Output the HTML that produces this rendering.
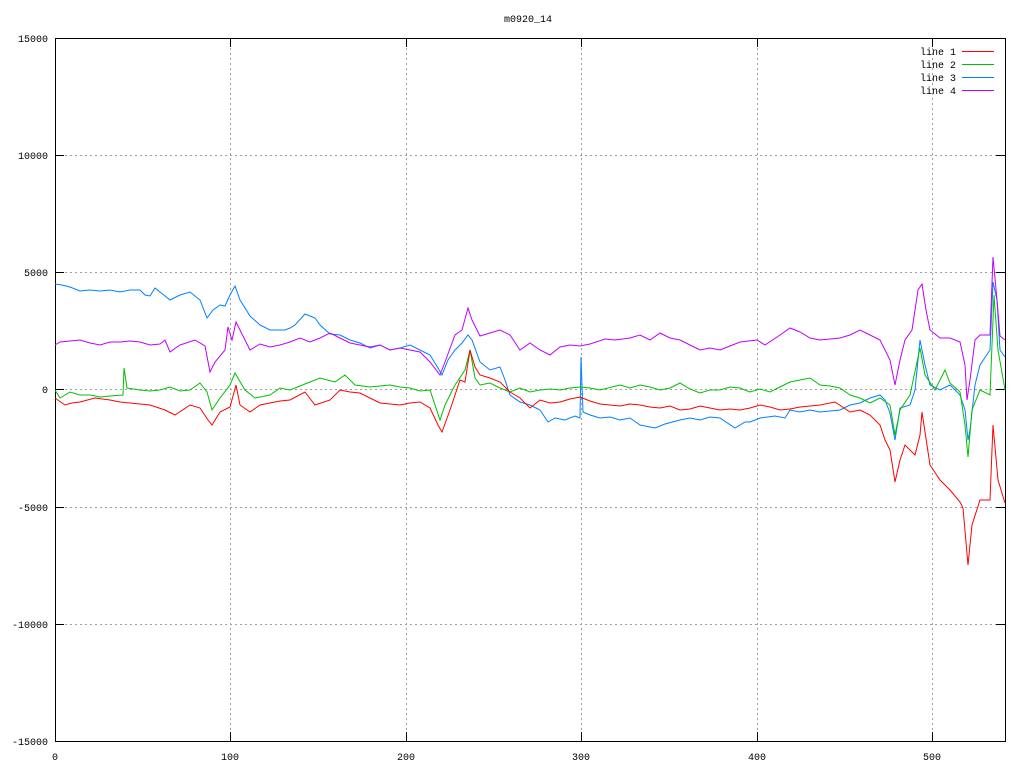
<!DOCTYPE html>
<html><head><style>
html,body{margin:0;padding:0;background:#fff;}
svg{display:block;}
text{font-family:"Liberation Mono",monospace;font-size:10px;fill:#000;}
</style></head><body>
<svg width="1024" height="768" viewBox="0 0 1024 768" xmlns="http://www.w3.org/2000/svg">
<rect width="1024" height="768" fill="#fff"/>
<g stroke="#a0a0a0" stroke-width="1" stroke-dasharray="2,3" fill="none" shape-rendering="crispEdges">
<line x1="55" y1="155.5" x2="1005" y2="155.5"/>
<line x1="55" y1="272.5" x2="1005" y2="272.5"/>
<line x1="55" y1="389.5" x2="1005" y2="389.5"/>
<line x1="55" y1="507.5" x2="1005" y2="507.5"/>
<line x1="55" y1="624.5" x2="1005" y2="624.5"/>
<line x1="230.5" y1="38" x2="230.5" y2="741"/>
<line x1="406.5" y1="38" x2="406.5" y2="741"/>
<line x1="581.5" y1="38" x2="581.5" y2="741"/>
<line x1="757.5" y1="38" x2="757.5" y2="741"/>
<line x1="932.5" y1="38" x2="932.5" y2="741"/>
</g>
<g stroke="#000" stroke-width="1" fill="none" shape-rendering="crispEdges">
<rect x="55.5" y="38.5" width="950" height="703"/>
<path d="M55 155.5h9M55 272.5h9M55 389.5h9M55 507.5h9M55 624.5h9M1005 155.5h-9M1005 272.5h-9M1005 389.5h-9M1005 507.5h-9M1005 624.5h-9M230.5 741v-9M406.5 741v-9M581.5 741v-9M757.5 741v-9M932.5 741v-9M230.5 38v9M406.5 38v9M581.5 38v9M757.5 38v9M932.5 38v9"/>
</g>
<g text-anchor="end">
<text x="48" y="42">15000</text>
<text x="48" y="159">10000</text>
<text x="48" y="276">5000</text>
<text x="48" y="393">0</text>
<text x="48" y="511">-5000</text>
<text x="48" y="628">-10000</text>
<text x="48" y="745">-15000</text>
</g>
<g text-anchor="middle">
<text x="55" y="760">0</text>
<text x="230" y="760">100</text>
<text x="406" y="760">200</text>
<text x="581" y="760">300</text>
<text x="757" y="760">400</text>
<text x="932" y="760">500</text>
<text x="528" y="22">m0920_14</text>
</g>
<g text-anchor="end">
<text x="956" y="55">line 1</text>
<text x="956" y="68">line 2</text>
<text x="956" y="81">line 3</text>
<text x="956" y="94">line 4</text>
</g>
<g stroke-width="1" fill="none">
<line x1="962" y1="51.5" x2="994" y2="51.5" stroke="#ff0000"/>
<line x1="962" y1="64.5" x2="994" y2="64.5" stroke="#00c000"/>
<line x1="962" y1="77.5" x2="994" y2="77.5" stroke="#0080ff"/>
<line x1="962" y1="90.5" x2="994" y2="90.5" stroke="#c000ff"/>
<polyline stroke="#0080ff" points="55,284 62,285 70,287 80,291 90,290 100,291 110,290 120,292 130,290 140,290 145,295 150,296 155,288 160,292 170,300 180,295 190,292 200,300 207,318 213,310 220,305 225,306 230,295 235,286 240,300 250,316 260,325 270,330 275,330 285,330 290,328 295,325 305,314 315,318 320,325 330,334 340,335 350,340 360,343 370,348 380,345 390,350 400,348 410,345 420,350 430,355 438,368 442,375 448,360 455,350 462,343 468,335 472,340 480,362 490,370 500,367 505,380 510,395 520,402 530,405 540,410 548,422 555,418 565,420 575,416 580,418 581,357 583,412 590,415 600,418 610,417 620,420 630,418 640,425 655,428 665,424 680,420 690,418 700,420 710,417 720,418 735,428 745,422 750,422 760,418 775,416 785,418 790,410 800,412 810,410 820,412 840,410 850,405 860,403 870,398 880,395 885,400 890,413 895,440 900,408 910,405 915,390 920,340 925,365 930,385 940,390 950,385 960,395 965,410 968,440 970,430 975,385 980,365 990,350 993,282 997,300 1000,350 1005,357"/>
<polyline stroke="#c000ff" points="55,345 60,342 70,341 80,340 90,343 100,345 110,342 120,342 130,341 140,342 150,345 160,344 165,340 170,352 180,345 195,340 205,346 210,372 215,362 225,350 228,327 232,340 236,322 240,330 250,350 260,344 270,347 280,345 290,342 300,338 310,342 320,338 330,333 340,338 350,343 360,345 370,347 380,345 390,350 400,348 410,350 420,352 430,362 440,375 445,362 455,335 462,330 468,308 472,320 480,336 490,333 500,330 510,335 520,350 530,343 540,350 550,355 560,347 570,345 580,346 590,344 605,339 615,340 630,338 640,335 650,340 660,333 670,338 680,340 690,345 700,350 710,348 720,350 730,346 740,342 757,340 765,345 780,335 790,328 800,332 810,338 820,340 840,338 850,335 860,330 870,335 880,340 890,360 895,385 900,360 905,340 912,330 918,290 922,284 926,310 930,330 940,338 950,338 960,342 965,365 967,400 970,380 975,340 980,335 990,335 993,257 997,300 1000,336 1005,340"/>
<polyline stroke="#00c000" points="55,390 60,398 70,392 80,395 90,395 100,397 110,396 123,395 124,368 127,388 140,390 150,391 160,390 170,387 180,391 190,390 200,383 207,392 212,410 220,398 230,385 235,373 245,390 255,398 270,395 280,388 290,390 300,386 310,382 320,378 335,382 345,375 355,385 370,387 380,386 390,385 400,387 410,388 420,391 430,390 440,420 445,405 455,385 465,370 470,350 475,378 480,385 490,383 500,388 510,392 520,388 530,392 540,390 550,389 560,390 570,388 580,387 590,388 600,390 620,385 630,388 640,385 650,387 660,390 670,388 680,383 690,389 700,393 710,390 720,390 730,387 740,388 750,392 760,389 770,392 780,387 790,382 800,380 810,378 820,385 830,386 840,388 850,395 860,398 870,403 880,398 890,405 895,435 900,410 910,395 920,348 925,375 935,390 945,370 950,383 960,392 965,425 968,457 972,410 980,390 990,395 994,295 998,350 1005,390"/>
<polyline stroke="#ff0000" points="55,398 65,405 72,403 80,402 95,398 110,400 120,402 130,403 140,404 150,405 165,410 175,415 190,405 200,408 208,420 212,425 220,412 230,407 236,385 240,405 250,412 260,405 270,403 280,401 290,400 305,392 315,405 330,400 340,390 350,392 360,393 370,398 380,403 390,404 400,405 410,403 420,402 430,408 438,425 442,432 450,410 460,380 465,382 470,350 475,367 480,375 490,378 500,382 510,392 520,398 530,408 540,400 550,403 560,402 570,399 580,397 590,401 600,404 610,405 620,406 630,404 640,405 650,407 660,408 670,406 680,410 690,409 700,406 710,408 720,410 730,409 740,410 750,408 760,405 770,407 780,410 790,409 800,407 810,406 820,405 835,402 850,412 860,410 870,415 880,425 885,440 890,450 895,482 900,460 905,445 915,455 920,435 922,412 930,465 940,480 950,490 960,502 963,508 968,565 972,525 980,500 990,500 993,425 998,480 1005,503"/>
</g>
</svg>
</body></html>
